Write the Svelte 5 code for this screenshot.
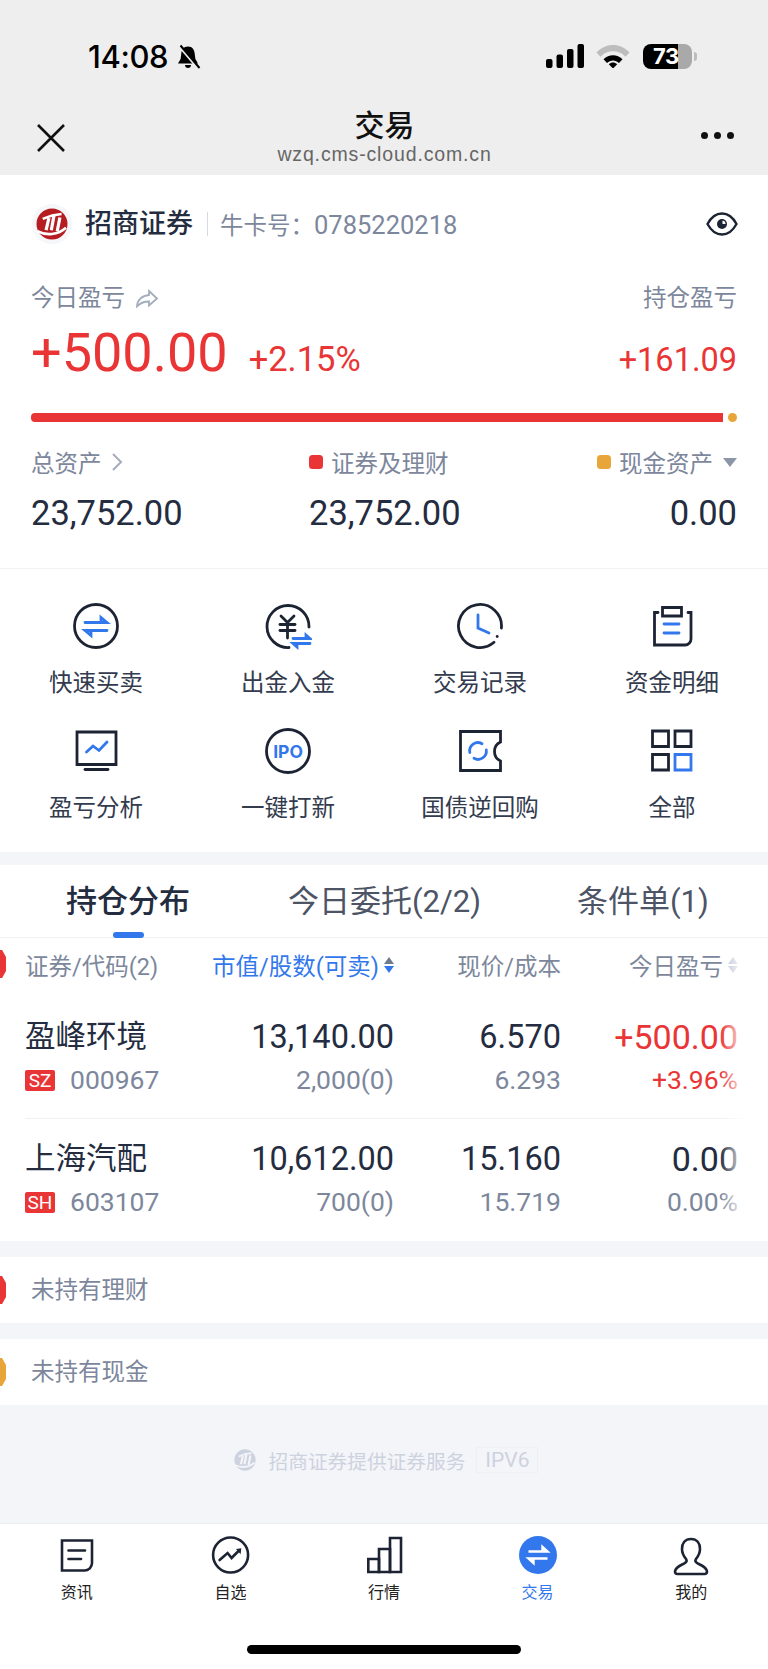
<script>
  const actions = [
    { label: '快速买卖', ring: true, blue: ['M13 20.5H35L29 15.5V20.5', 'M35 28.5H13L19 33.5V28.5'] },
    { label: '出金入金', ink: ['M45 25A21 21 0 1 0 25 45.5', 'M17 14l6.5 6.5 6.5-6.5', 'M16 22.5h15', 'M16 28.5h15', 'M23.5 21v15'], blue: ['M29 36.5H46L42 33V36.5', 'M46 41.5H29L33 45V41.5'] },
    { label: '交易记录', ink: ['M45.4 26A21.5 21.5 0 1 0 38 40.3', 'M41.2 34.4v.2'], blue: ['M22 13V26L33 31'] },
    { label: '资金明细', ink: ['M10 10.5H6.5V43H37a6 6 0 0 0 6-6V10.5H40', 'M14.5 5.5H33.5V14H14.5Z'], blue: ['M16 22h15', 'M16 31h15'] },
    { label: '盈亏分析', ink: ['M5 5H44V37.5H5Z', 'M13 42.5H36'], blue: ['M14.5 25L21 19L27 23.5L35 15'] },
    { label: '一键打新', ring: true, text: 'IPO' },
    { label: '国债逆回购', ink: ['M4.5 4.5H44.5V15C40 17 38.5 21 38.5 24.5S40 32 44.5 34V43.5H4.5Z'], blue: ['M13.8 25.5A8.3 8.3 0 0 1 26 16.7', 'M30.3 23A8.3 8.3 0 0 1 18 31.3'] },
    { label: '全部', ink: ['M4.5 4H20.5V19.5H4.5Z', 'M27 4H43V19.5H27Z', 'M4.5 27.5H20.5V43H4.5Z'], blue: ['M27 27.5H43V43H27Z'] }
  ];

  const holdings = [
    { name: '盈峰环境', market: 'SZ', code: '000967', value: '13,140.00', shares: '2,000(0)', price: '6.570', cost: '6.293', profit: '+500.00', rate: '+3.96%', up: true },
    { name: '上海汽配', market: 'SH', code: '603107', value: '10,612.00', shares: '700(0)', price: '15.160', cost: '15.719', profit: '0.00', rate: '0.00%', up: false }
  ];

  const tabs = [
    { label: '资讯', ink: ['M9 9.5H39V32a7.5 7.5 0 0 1-7.5 7.5H9Z', 'M15.5 19.5H32', 'M15.5 28H28'] },
    { label: '自选', circle: true, ink: ['M13.6 29L21.6 22L25.6 27L32 20.5'], fill: 'M30 18L35.3 17.3L34.6 23.3Z' },
    { label: '行情', ink: ['M8.3 28H19V41H8.3Z', 'M19 18H30V41H19Z', 'M30 7H41V41H30Z'] },
    { label: '交易', active: true },
    { label: '我的', ink: ['M24 8C18 8 15 12.5 15 18C15 22.5 17 25.5 19 28C20 29.5 19.5 31 18 32C15 34 8.5 35.5 8 40.5C8 42 9 43 10.5 43H37.5C39 43 40 42 40 40.5C39.5 35.5 33 34 30 32C28.5 31 28 29.5 29 28C31 25.5 33 22.5 33 18C33 12.5 30 8 24 8Z'] }
  ];
</script>

{#snippet brand(color, ground)}
  <svg viewBox="0 0 32 32" class="brand-mark">
    <circle cx="16" cy="16" r="15.5" fill={color} />
    <path d="M1.5 23.2C10 28 22 27 30 19.8" stroke={ground} stroke-width="2.6" fill="none" />
    <path d="M10.1 22.2L12.9 10.1M15.3 22.2L18 7.4M21.2 23.2L23.9 9.5" stroke={ground} stroke-width="3.2" fill="none" />
    <path d="M6.7 10.8C12 8.5 19 6.5 25.6 6" stroke={ground} stroke-width="2.4" fill="none" />
  </svg>
{/snippet}

<div class="page">
  <header class="top">
    <div class="status">
      <span class="clock">14:08</span>
      <svg class="bell" viewBox="0 0 26 26">
        <path d="M13 2.5c-4.5 0-6.5 3.5-6.8 8L5.6 15 3 19.5h20L20.4 15l-.6-4.5C19.500 6 17.500 2.500 13 2.500Z" />
        <path d="M10 21h6c0 2-1.2 3-3 3s-3-1-3-3Z" />
        <path class="bell-cut" d="M4 1.5L23 24" />
        <path class="bell-slash" d="M5.5 1.5L24.5 24" />
      </svg>
      <div class="spacer"></div>
      <svg class="signal" viewBox="0 0 38 24">
        <rect x="0" y="15" width="6.5" height="9" rx="2" />
        <rect x="10.5" y="10.5" width="6.5" height="13.5" rx="2" />
        <rect x="21" y="5" width="6.5" height="19" rx="2" />
        <rect x="31.5" y="0" width="6.5" height="24" rx="2" />
      </svg>
      <svg class="wifi" viewBox="0 0 34 24">
        <path class="wifi-dim" d="M0.5 8.5C9.5 -1.5 24.5 -1.5 33.5 8.5L29.5 12.8C22.5 5.5 11.5 5.5 4.5 12.8Z" />
        <path d="M7.5 15.3C12.8 9.8 21.2 9.8 26.5 15.3L23 19C19.5 15.5 14.5 15.5 11 19Z" />
        <path d="M12.8 20.3C15.2 18 18.8 18 21.2 20.3L17 24.5Z" />
      </svg>
      <div class="battery">
        <div class="battery-body"><span>73</span></div>
        <i></i>
      </div>
    </div>
    <div class="titlebar">
      <svg class="close" viewBox="0 0 30 30"><path d="M2 2L28 28M28 2L2 28" /></svg>
      <div class="title">
        <strong>交易</strong>
        <span>wzq.cms-cloud.com.cn</span>
      </div>
      <div class="dots"><i></i><i></i><i></i></div>
    </div>
  </header>

  <section class="summary">
    <div class="account">
      <div class="brand-ring">{@render brand('#b51d22', '#fff')}</div>
      <span class="broker">招商证券</span>
      <span class="card">牛卡号：<span class="card-no">0785220218</span></span>
      <svg class="eye" viewBox="0 0 32 24">
        <path d="M1.5 12C5 5.5 10 1.5 16 1.5S27 5.5 30.5 12C27 18.5 22 22.5 16 22.5S5 18.5 1.5 12Z" />
        <circle cx="16" cy="12" r="5" />
        <path class="eye-glint" d="M16.5 8.5A3.5 3.5 0 0 1 19.5 12L16.5 12Z" />
      </svg>
    </div>

    <div class="between label-row">
      <span class="muted">今日盈亏
        <svg class="share" viewBox="0 0 24 19"><path d="M14 2L22 9.5L14 16.5V12.5C8.5 12.5 5 14 2 17.5C2 11.5 7 6.5 14 6Z" /></svg>
      </span>
      <span class="muted">持仓盈亏</span>
    </div>

    <div class="between figures">
      <div class="today">
        <span class="big">+500.00</span>
        <span class="rate">+2.15%</span>
      </div>
      <span class="held">+161.09</span>
    </div>

    <div class="bar"><div class="bar-red"></div><div class="bar-dot"></div></div>

    <div class="assets">
      <div class="asset">
        <span class="muted">总资产 <svg class="chev" viewBox="0 0 12 20"><path d="M2 2L10 10L2 18" /></svg></span>
        <b>23,752.00</b>
      </div>
      <div class="asset">
        <span class="muted"><i class="swatch red"></i>证券及理财</span>
        <b>23,752.00</b>
      </div>
      <div class="asset right">
        <span class="muted"><i class="swatch orange"></i>现金资产 <i class="caret"></i></span>
        <b>0.00</b>
      </div>
    </div>
  </section>

  <nav class="actions">
    {#each actions as item}
      <div class="action">
        <svg viewBox="0 0 48 48" class="action-icon">
          {#if item.ring}<circle class="ink" cx="24" cy="24" r="21.5" />{/if}
          {#each item.ink ?? [] as d}<path class="ink" {d} />{/each}
          {#each item.blue ?? [] as d}<path class="blue" {d} />{/each}
          {#if item.text}<text x="24" y="30.5" class="ipo">{item.text}</text>{/if}
        </svg>
        <span>{item.label}</span>
      </div>
    {/each}
  </nav>

  <div class="gap first"></div>

  <section class="positions">
    <div class="pos-tabs">
      <span class="pos-tab on">持仓分布<i></i></span>
      <span class="pos-tab">今日委托(2/2)</span>
      <span class="pos-tab">条件单(1)</span>
    </div>

    <div class="table-wrap">
      <i class="marker red"></i>
      <div class="grid head">
        <span>证券/代码(2)</span>
        <span class="num sorted">市值/股数(可卖)<i class="sort on"></i></span>
        <span class="num">现价/成本</span>
        <span class="num">今日盈亏<i class="sort"></i></span>
      </div>

      {#each holdings as row, i}
        <div class="grid row" class:first={i === 0} class:last={i === holdings.length - 1}>
          <div class="cell">
            <span class="name">{row.name}</span>
            <span class="sub code"><em>{row.market}</em>{row.code}</span>
          </div>
          <div class="cell num"><span class="val">{row.value}</span><span class="sub">{row.shares}</span></div>
          <div class="cell num"><span class="val">{row.price}</span><span class="sub">{row.cost}</span></div>
          <div class="cell num profit" class:up={row.up}><span class="val">{row.profit}</span><span class="sub">{row.rate}</span></div>
        </div>
      {/each}
      <div class="fade"></div>
    </div>
  </section>

  <div class="gap"></div>
  <div class="empty"><i class="marker red"></i>未持有理财</div>
  <div class="gap"></div>
  <div class="empty"><i class="marker orange"></i>未持有现金</div>

  <footer class="provider">
    {@render brand('#cdd2df', '#f4f5f9')}
    <span>招商证券提供证券服务</span>
    <span class="ipv">IPV6</span>
  </footer>

  <div class="tabbar">
    <div class="tabs">
      {#each tabs as tab}
        <div class="tab" class:active={tab.active}>
          <svg viewBox="0 0 48 48">
            {#if tab.active}
              <circle cx="24" cy="24" r="19" class="solid" />
              <path class="swap" d="M14.5 20.5H33.5L28.5 16V20.5" />
              <path class="swap" d="M33.5 27.5H14.5L19.5 32V27.5" />
            {/if}
            {#if tab.circle}<circle class="ink" cx="24.6" cy="24" r="17.5" />{/if}
            {#each tab.ink ?? [] as d}<path class="ink" {d} />{/each}
            {#if tab.fill}<path class="tip" d={tab.fill} />{/if}
          </svg>
          <span>{tab.label}</span>
        </div>
      {/each}
    </div>
    <div class="home"></div>
  </div>
</div>

<style>
  :global(body) {
    margin: 0;
    background: #fff;
  }

  .page {
    --ink: #242c3f;
    --line: #1c2333;
    --muted: #7d879c;
    --red: #e93535;
    --orange: #e8a63a;
    --blue: #3278ec;
    --band: #f4f5f9;
    width: 768px;
    height: 1669px;
    overflow: hidden;
    font-family: Roboto, "Noto Sans CJK SC", sans-serif;
    color: var(--ink);
  }

  /* browser chrome */
  .top {
    height: 175px;
    background: #eee;
    color: #111;
  }

  .status {
    height: 100px;
    box-sizing: border-box;
    padding: 44px 71px 0 88px;
    display: flex;
    align-items: flex-start;
  }

  .clock {
    font: 500 31px/26px Inter, sans-serif;
    letter-spacing: -0.4px;
    color: #000;
  }

  .bell {
    width: 26px;
    height: 26px;
    margin-left: 7px;
  }

  .bell path {
    fill: #000;
  }

  .bell .bell-cut {
    fill: none;
    stroke: #eee;
    stroke-width: 3px;
  }

  .bell .bell-slash {
    fill: none;
    stroke: #000;
    stroke-width: 2px;
  }

  .spacer {
    flex: 1;
  }

  .signal {
    width: 38px;
    height: 24px;
  }

  .wifi {
    width: 34px;
    height: 24px;
    margin-left: 12px;
  }

  .wifi-dim {
    fill: #bdbdbd;
  }

  .battery {
    display: flex;
    align-items: center;
    margin-left: 13px;
  }

  .battery-body {
    width: 49px;
    height: 25px;
    border-radius: 8px;
    background: linear-gradient(90deg, #000 71%, #a9a9a9 71%);
    color: #fff;
    font: 700 22px/25px Inter, sans-serif;
    letter-spacing: -0.5px;
    padding-left: 10px;
    box-sizing: border-box;
  }

  .battery i {
    width: 3px;
    height: 9px;
    margin-left: 2px;
    border-radius: 0 3px 3px 0;
    background: #bdbdbd;
  }

  .titlebar {
    height: 75px;
    padding: 0 34px 0 36px;
    display: flex;
    justify-content: space-between;
    align-items: center;
  }

  .close {
    width: 30px;
    height: 30px;
  }

  .close path {
    stroke: #111;
    stroke-width: 2.6;
    fill: none;
  }

  .title {
    display: flex;
    flex-direction: column;
    align-items: center;
    margin-left: 2px;
  }

  .title strong {
    font-weight: 500;
    font-size: 30px;
    line-height: 34px;
    margin-top: -1px;
  }

  .title span {
    font: 19.5px/22px "Liberation Sans", sans-serif;
    letter-spacing: 0.85px;
    color: #666;
  }

  .dots {
    display: flex;
    gap: 6px;
    margin-top: -4px;
  }

  .dots i {
    width: 7px;
    height: 7px;
    border-radius: 50%;
    background: #111;
  }

  /* account summary */
  .summary {
    height: 394px;
    box-sizing: border-box;
    padding: 0 31px;
    border-bottom: 1px solid #f2f3f6;
  }

  .account {
    height: 98px;
    display: flex;
    align-items: center;
  }

  .brand-ring {
    width: 40px;
    height: 40px;
    border-radius: 50%;
    background: #f6f7f9;
    display: flex;
    align-items: center;
    justify-content: center;
    margin-left: 1px;
  }

  .brand-mark {
    width: 32px;
    height: 32px;
    flex: none;
  }

  .broker {
    margin-left: 13px;
    font-size: 27px;
    font-weight: 500;
    padding-right: 14px;
    border-right: 1px solid #d5d9e2;
    line-height: 24px;
    white-space: nowrap;
  }

  .card {
    margin-left: 12px;
    font-size: 23.5px;
    color: var(--muted);
    flex: 1;
  }

  .card-no {
    font-size: 25.5px;
  }

  .eye {
    width: 32px;
    height: 24px;
    margin-right: -1px;
  }

  .eye path {
    fill: none;
    stroke: var(--line);
    stroke-width: 2.4;
  }

  .eye circle {
    fill: var(--line);
  }

  .eye .eye-glint {
    fill: #fff;
    stroke: none;
  }

  .between {
    display: flex;
    justify-content: space-between;
  }

  .label-row {
    margin-top: 10px;
    line-height: 30px;
  }

  .muted {
    font-size: 23.5px;
    color: var(--muted);
    display: inline-flex;
    align-items: center;
    white-space: nowrap;
  }

  .share {
    width: 24px;
    height: 19px;
    margin-left: 10px;
  }

  .share path {
    fill: none;
    stroke: #a4adbd;
    stroke-width: 1.8;
  }

  .figures {
    margin-top: 11px;
    height: 58px;
    align-items: baseline;
    color: var(--red);
  }

  .today {
    display: flex;
    align-items: baseline;
    gap: 21px;
  }

  .big {
    font-size: 54px;
    line-height: 58px;
  }

  .rate {
    font-size: 34.5px;
  }

  .held {
    font-size: 32.5px;
  }

  .bar {
    margin-top: 31px;
    display: flex;
    align-items: center;
    gap: 5px;
  }

  .bar-red {
    flex: 1;
    height: 9px;
    background: var(--red);
    border-radius: 4px 0 0 4px;
  }

  .bar-dot {
    width: 9px;
    height: 9px;
    border-radius: 50%;
    background: var(--orange);
  }

  .assets {
    margin-top: 23px;
    display: grid;
    grid-template-columns: 278px 1fr auto;
  }

  .asset {
    display: flex;
    flex-direction: column;
    gap: 14px;
  }

  .asset.right {
    align-items: flex-end;
  }

  .asset b {
    font-weight: 400;
    font-size: 34.5px;
    line-height: 40px;
  }

  .chev {
    width: 12px;
    height: 20px;
    margin-left: 9px;
  }

  .chev path {
    fill: none;
    stroke: #a4adbd;
    stroke-width: 2;
  }

  .swatch {
    width: 14px;
    height: 14px;
    border-radius: 3.5px;
    margin-right: 8px;
  }

  .red {
    background: var(--red);
  }

  .orange {
    background: var(--orange);
  }

  .caret {
    width: 0;
    height: 0;
    margin-left: 10px;
    border-style: solid;
    border-width: 9px 7px 0;
    border-color: #8c96a9 transparent transparent;
  }

  /* shortcut grid */
  .actions {
    height: 283px;
    display: grid;
    grid-template-columns: repeat(4, 192px);
    align-content: start;
    padding-top: 33px;
    box-sizing: border-box;
    row-gap: 22px;
  }

  .action {
    height: 103px;
    display: flex;
    flex-direction: column;
    align-items: center;
    font-size: 23.5px;
    line-height: 30px;
    color: #333b4e;
  }

  .action-icon {
    width: 48px;
    height: 48px;
    margin-bottom: 18px;
  }

  .ink {
    fill: none;
    stroke: var(--line);
    stroke-width: 2.8;
    stroke-linecap: round;
  }

  .blue {
    fill: none;
    stroke: var(--blue);
    stroke-width: 2.8;
    stroke-linecap: round;
  }

  .ipo {
    font: 700 17.5px Inter, sans-serif;
    text-anchor: middle;
    fill: var(--blue);
  }

  .gap {
    height: 16px;
    background: var(--band);
  }

  .gap.first {
    height: 13px;
  }

  /* holdings */
  .pos-tabs {
    height: 72px;
    border-bottom: 1px solid #eff0f3;
    display: grid;
    grid-template-columns: 254px 289px 1fr;
  }

  .pos-tab {
    font-size: 31px;
    line-height: 74px;
    color: #4c5466;
    white-space: nowrap;
    padding-left: 34px;
    position: relative;
  }

  .pos-tab:first-child {
    padding-left: 66px;
  }

  .pos-tab.on {
    color: var(--ink);
    font-weight: 500;
  }

  .pos-tab.on i {
    position: absolute;
    left: 113px;
    bottom: 1px;
    width: 31px;
    height: 6px;
    border-radius: 3px;
    background: var(--blue);
  }

  .table-wrap {
    position: relative;
  }

  .marker {
    position: absolute;
    left: 0;
    width: 6px;
    height: 28px;
    clip-path: polygon(0 0, 35% 0, 100% 25%, 100% 75%, 35% 100%, 0 100%);
  }

  .table-wrap > .marker {
    top: 12px;
  }

  .grid {
    display: grid;
    grid-template-columns: 205px 164px 167px 177px;
    padding-left: 25px;
  }

  .head {
    height: 54px;
    align-items: center;
    font-size: 23.5px;
    color: var(--muted);
    white-space: nowrap;
  }

  .num {
    text-align: right;
  }

  .head .num {
    display: flex;
    justify-content: flex-end;
    align-items: center;
  }

  .head .sorted {
    color: var(--blue);
  }

  .sort {
    display: inline-flex;
    flex-direction: column;
    gap: 2px;
    margin-left: 5px;
  }

  .sort::before,
  .sort::after {
    content: "";
    border-style: solid;
    border-color: transparent;
  }

  .sort::before {
    border-width: 0 5px 7px;
    border-bottom-color: #b9c0cd;
  }

  .sort::after {
    border-width: 7px 5px 0;
    border-top-color: #b9c0cd;
  }

  .sort.on::before {
    border-bottom-color: #6f7a90;
  }

  .sort.on::after {
    border-top-color: var(--blue);
  }

  .row {
    height: 122px;
    box-sizing: border-box;
    padding-top: 20px;
    position: relative;
  }

  .row.first {
    margin-top: 5px;
  }

  .row:not(.last)::after {
    content: "";
    position: absolute;
    left: 25px;
    right: 23px;
    bottom: 0;
    height: 1px;
    background: #eff0f3;
  }

  .cell {
    display: flex;
    flex-direction: column;
  }

  .cell.num {
    align-items: flex-end;
  }

  .name {
    font-size: 30.5px;
    line-height: 40px;
  }

  .val {
    font-size: 32.5px;
    line-height: 40px;
  }

  .profit .val {
    font-size: 34px;
  }

  .sub {
    font-size: 26.5px;
    line-height: 32px;
    margin-top: 7px;
    color: var(--muted);
  }

  .cell.up,
  .cell.up .sub {
    color: var(--red);
  }

  .code {
    display: flex;
    align-items: center;
  }

  .code em {
    font: normal 19px/21px Roboto, sans-serif;
    width: 30px;
    height: 21px;
    border-radius: 2px;
    background: var(--red);
    color: #fff;
    text-align: center;
    margin-right: 15px;
  }

  .fade {
    position: absolute;
    top: 0;
    bottom: 0;
    right: 0;
    width: 48px;
    background: linear-gradient(90deg, rgba(255, 255, 255, 0), #fff 55%);
  }

  .empty {
    height: 66px;
    box-sizing: border-box;
    padding: 0 0 4px 31px;
    position: relative;
    display: flex;
    align-items: center;
    font-size: 23.5px;
    color: var(--muted);
  }

  .empty .marker {
    top: 19px;
  }

  .provider {
    height: 118px;
    background: var(--band);
    display: flex;
    align-items: center;
    justify-content: center;
    color: #cdd2df;
    font-size: 19.7px;
    padding: 0 0 8px 4px;
    box-sizing: border-box;
  }

  .provider .brand-mark {
    width: 22px;
    height: 22px;
    margin-right: 13px;
  }

  .ipv {
    margin-left: 11px;
    width: 62px;
    height: 26px;
    line-height: 24px;
    text-align: center;
    box-sizing: border-box;
    border: 1px solid #eef0f5;
    font-size: 21px;
  }

  /* bottom navigation */
  .tabbar {
    height: 146px;
    box-sizing: border-box;
    border-top: 1px solid #eceef2;
    background: #fff;
  }

  .tabs {
    display: grid;
    grid-template-columns: repeat(5, 1fr);
    padding-top: 7px;
  }

  .tab {
    height: 88px;
    display: flex;
    flex-direction: column;
    align-items: center;
    font-size: 16px;
    line-height: 24px;
    color: #222;
  }

  .tab svg {
    width: 48px;
    height: 48px;
    margin-bottom: 2px;
  }

  .tab.active {
    color: var(--blue);
  }

  .tab .ink {
    stroke-width: 2.6;
  }

  .solid {
    fill: var(--blue);
  }

  .swap {
    fill: none;
    stroke: #fff;
    stroke-width: 2.4;
  }

  .tip {
    fill: var(--line);
  }

  .home {
    width: 274px;
    height: 9px;
    border-radius: 5px;
    background: #000;
    margin: 26px auto 0;
  }
</style>
